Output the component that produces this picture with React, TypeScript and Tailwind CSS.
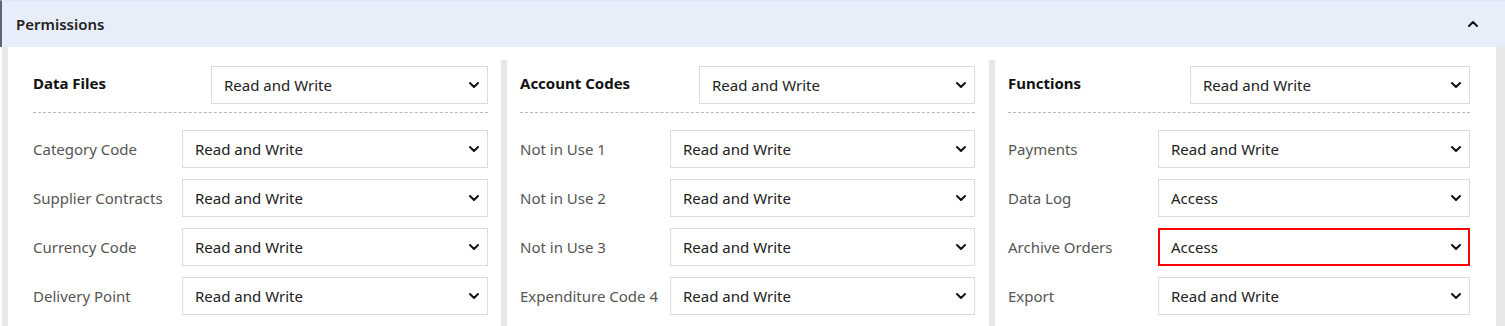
import { ChevronDown, ChevronUp } from 'lucide-react';

type Row = { label: string; value: string; highlight?: boolean };

type Group = {
  title: string;
  value: string;
  rows: Row[];
  className: string;
  headLabel: string;
  rowLabel: string;
};

const groups: Group[] = [
  {
    title: 'Data Files',
    value: 'Read and Write',
    className: 'w-[493px] border-l-white pl-[19px] pr-[13px]',
    headLabel: 'w-[178px]',
    rowLabel: 'w-[149px]',
    rows: [
      { label: 'Category Code', value: 'Read and Write' },
      { label: 'Supplier Contracts', value: 'Read and Write' },
      { label: 'Currency Code', value: 'Read and Write' },
      { label: 'Delivery Point', value: 'Read and Write' },
    ],
  },
  {
    title: 'Account Codes',
    value: 'Read and Write',
    className: 'w-[488px] border-l-[#e8e8e8] pl-[13px] pr-[14px]',
    headLabel: 'w-[179px]',
    rowLabel: 'w-[150px]',
    rows: [
      { label: 'Not in Use 1', value: 'Read and Write' },
      { label: 'Not in Use 2', value: 'Read and Write' },
      { label: 'Not in Use 3', value: 'Read and Write' },
      { label: 'Expenditure Code 4', value: 'Read and Write' },
    ],
  },
  {
    title: 'Functions',
    value: 'Read and Write',
    className: 'flex-1 border-l-[#e8e8e8] pl-[13px] pr-[26px]',
    headLabel: 'w-[182px]',
    rowLabel: 'w-[150px]',
    rows: [
      { label: 'Payments', value: 'Read and Write' },
      { label: 'Data Log', value: 'Access' },
      { label: 'Archive Orders', value: 'Access', highlight: true },
      { label: 'Export', value: 'Read and Write' },
    ],
  },
];

function SelectBox({ value, highlight }: { value: string; highlight?: boolean }) {
  return (
    <div
      className={`relative flex-1 h-[38px] flex items-center bg-white ${
        highlight ? 'border-2 border-[#ff0000] pl-[11px]' : 'border border-[#dcdcdc] pl-[12px]'
      }`}
    >
      <span className="text-[15px] text-[#222] pt-px">{value}</span>
      <ChevronDown
        className={`absolute top-1/2 -translate-y-1/2 text-[#111] ${highlight ? 'right-[4px]' : 'right-[5px]'}`}
        size={16}
        strokeWidth={3}
      />
    </div>
  );
}

function Column({ group }: { group: Group }) {
  return (
    <div className={`shrink-0 border-l-[6px] pt-[6px] ${group.className}`}>
      <div className="flex items-center pb-[8px] border-b border-dashed border-[#b8b8b8]">
        <div className={`${group.headLabel} shrink-0 text-[15px] font-bold text-[#111] mb-1`}>
          {group.title}
        </div>
        <SelectBox value={group.value} />
      </div>
      <div className="flex flex-col gap-[11px] pt-[17px]">
        {group.rows.map((row) => (
          <div key={row.label} className="flex items-center">
            <div className={`${group.rowLabel} shrink-0 text-[15px] text-[#555]`}>{row.label}</div>
            <SelectBox value={row.value} highlight={row.highlight} />
          </div>
        ))}
      </div>
    </div>
  );
}

export default function App() {
  return (
    <div
      className="w-[1505px] h-[326px] overflow-hidden bg-white"
      style={{ fontFamily: '"Noto Sans", "Open Sans", Arial, sans-serif' }}
    >
      <div className="h-[47px] bg-[#e8eef9] border-t border-[#dfe6f3] border-l-2 border-l-[#5d6472] flex items-center justify-between pl-[14px] pr-[24px]">
        <span className="text-[15px] font-semibold text-[#222]">Permissions</span>
        <ChevronUp size={16} strokeWidth={3} className="text-[#111]" />
      </div>
      <div className="ml-[2px] flex border-l-[6px] border-l-[#e8e8e8] border-r-[9px] border-r-[#e8e8e8] pt-[13px] h-[279px]">
        {groups.map((g) => (
          <Column key={g.title} group={g} />
        ))}
      </div>
    </div>
  );
}
